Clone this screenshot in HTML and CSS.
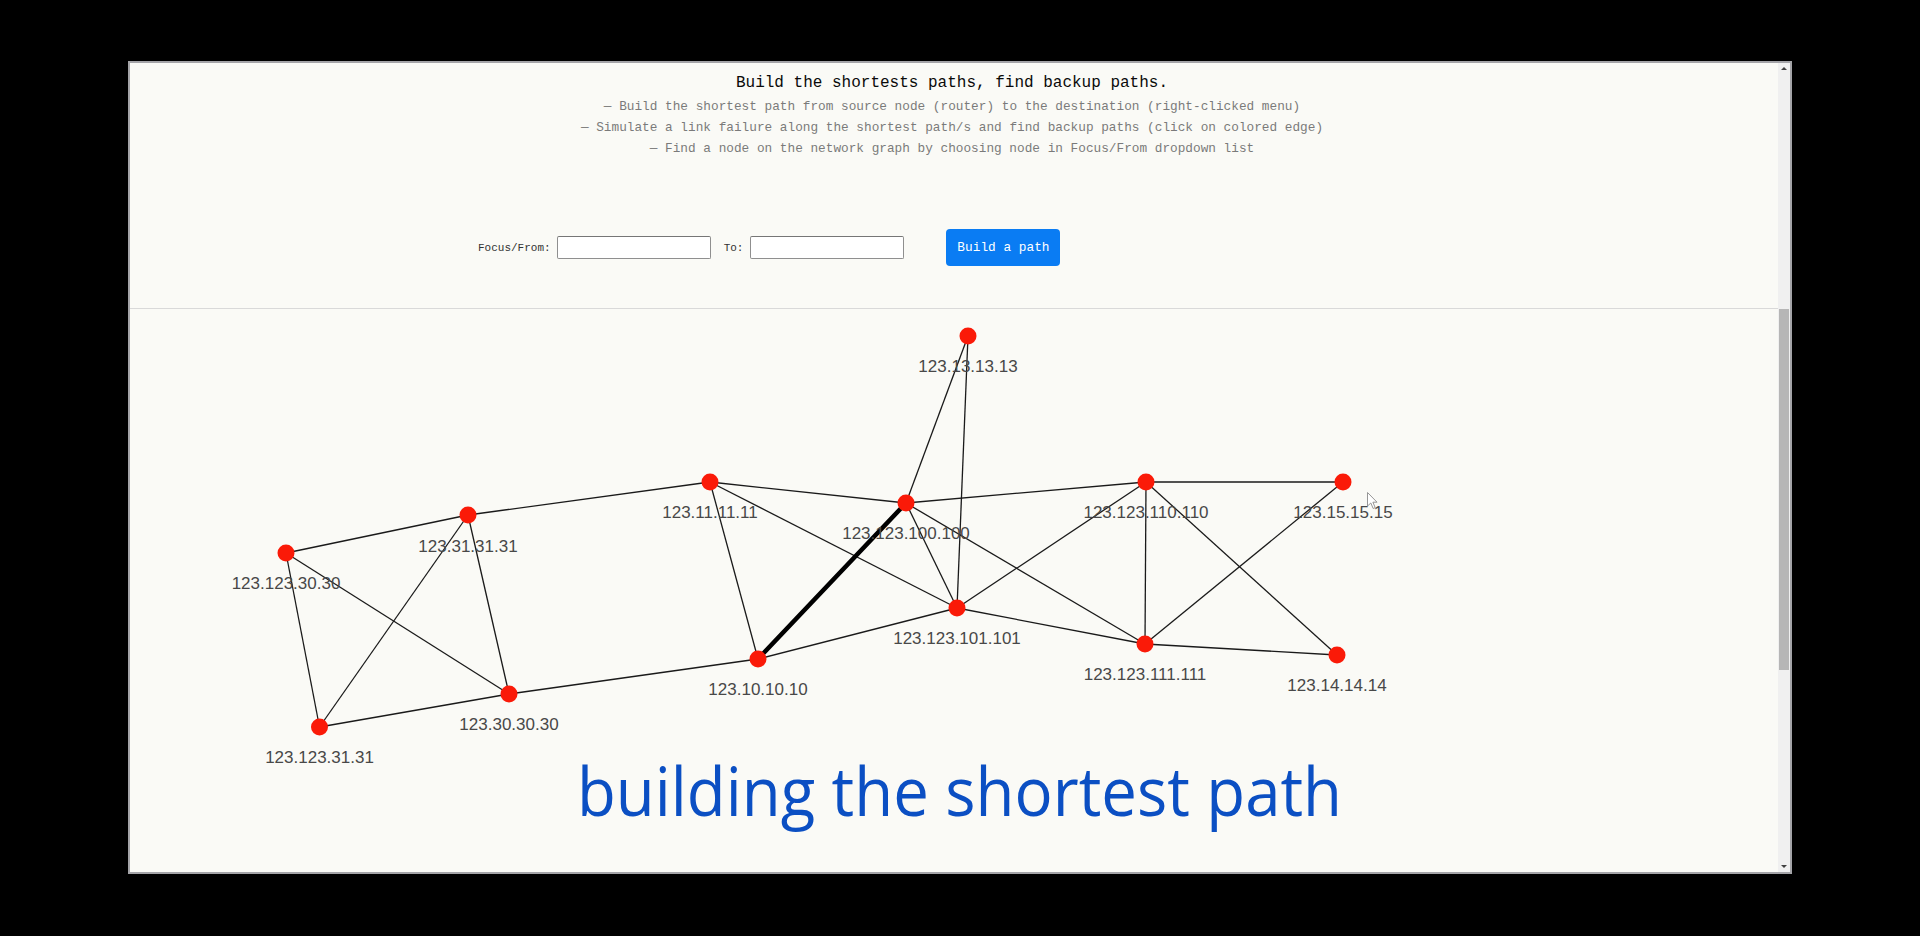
FILE: index.html
```html
<!DOCTYPE html>
<html lang="en">
<head>
<meta charset="utf-8">
<title>Shortest paths</title>
<link rel="stylesheet" href="styles.css">
</head>
<body>
<div class="stage">
  <div class="window">
    <div class="content">
      <header class="header">
        <h1 class="title">Build the shortests paths, find backup paths.</h1>
        <p class="hint">— Build the shortest path from source node (router) to the destination (right-clicked menu)</p>
        <p class="hint">— Simulate a link failure along the shortest path/s and find backup paths (click on colored edge)</p>
        <p class="hint">— Find a node on the network graph by choosing node in Focus/From dropdown list</p>
        <form class="form" onsubmit="return false;">
          <label class="lbl lbl-from" for="from">Focus/From:</label>
          <input class="field field-from" id="from" type="text">
          <label class="lbl lbl-to" for="to">To:</label>
          <input class="field field-to" id="to" type="text">
          <button class="btn" type="button">Build a path</button>
        </form>
      </header>
      <div class="graph">
        <svg class="net" width="1648" height="563" viewBox="130 309 1648 563" xmlns="http://www.w3.org/2000/svg">
          <g class="edges">
            <line x1="286" y1="553" x2="468" y2="515"/>
            <line x1="286" y1="553" x2="319.5" y2="727"/>
            <line x1="286" y1="553" x2="509" y2="694"/>
            <line x1="468" y1="515" x2="319.5" y2="727"/>
            <line x1="468" y1="515" x2="509" y2="694"/>
            <line x1="468" y1="515" x2="710" y2="482"/>
            <line x1="319.5" y1="727" x2="509" y2="694"/>
            <line x1="509" y1="694" x2="758" y2="659"/>
            <line x1="710" y1="482" x2="758" y2="659"/>
            <line x1="710" y1="482" x2="906" y2="503"/>
            <line x1="710" y1="482" x2="957" y2="608"/>
            <line x1="758" y1="659" x2="957" y2="608"/>
            <line x1="906" y1="503" x2="968" y2="336"/>
            <line x1="957" y1="608" x2="968" y2="336"/>
            <line x1="906" y1="503" x2="957" y2="608"/>
            <line x1="906" y1="503" x2="1146" y2="482"/>
            <line x1="906" y1="503" x2="1145" y2="644"/>
            <line x1="957" y1="608" x2="1146" y2="482"/>
            <line x1="957" y1="608" x2="1145" y2="644"/>
            <line x1="1146" y1="482" x2="1343" y2="482"/>
            <line x1="1146" y1="482" x2="1145" y2="644"/>
            <line x1="1146" y1="482" x2="1337" y2="655"/>
            <line x1="1145" y1="644" x2="1343" y2="482"/>
            <line x1="1145" y1="644" x2="1337" y2="655"/>
            <line class="path" x1="758" y1="659" x2="906" y2="503"/>
          </g>
          <g class="labels">
            <text x="968" y="371.5">123.13.13.13</text>
            <text x="906" y="538.5">123.123.100.100</text>
            <text x="1146" y="517.5">123.123.110.110</text>
            <text x="1343" y="517.5">123.15.15.15</text>
            <text x="957" y="643.5">123.123.101.101</text>
            <text x="1145" y="679.5">123.123.111.111</text>
            <text x="1337" y="691">123.14.14.14</text>
            <text x="286" y="588.5">123.123.30.30</text>
            <text x="468" y="551.5">123.31.31.31</text>
            <text x="710" y="517.5">123.11.11.11</text>
            <text x="758" y="694.5">123.10.10.10</text>
            <text x="509" y="729.5">123.30.30.30</text>
            <text x="319.5" y="762.5">123.123.31.31</text>
          </g>
          <g class="nodes">
            <circle cx="968" cy="336" r="8.5"/>
            <circle cx="906" cy="503" r="8.5"/>
            <circle cx="1146" cy="482" r="8.5"/>
            <circle cx="1343" cy="482" r="8.5"/>
            <circle cx="957" cy="608" r="8.5"/>
            <circle cx="1145" cy="644" r="8.5"/>
            <circle cx="1337" cy="655" r="8.5"/>
            <circle cx="286" cy="553" r="8.5"/>
            <circle cx="468" cy="515" r="8.5"/>
            <circle cx="710" cy="482" r="8.5"/>
            <circle cx="758" cy="659" r="8.5"/>
            <circle cx="509" cy="694" r="8.5"/>
            <circle cx="319.5" cy="727" r="8.5"/>
          </g>
          <path class="cursor" d="M1367.5 492.5 L1367.5 506 L1370.8 503 L1373.2 508.5 L1375.2 507.6 L1372.9 502.2 L1377 502.2 Z"/>
          <text class="caption" x="577" y="816" textLength="765" lengthAdjust="spacingAndGlyphs">building the shortest path</text>
        </svg>
      </div>
    </div>
    <div class="scrollbar">
      <div class="arrow arrow-up"></div>
      <div class="track">
        <div class="thumb"></div>
      </div>
      <div class="arrow arrow-down"></div>
    </div>
  </div>
</div>
</body>
</html>
```
FILE: styles.css
```css
html, body {
  margin: 0;
  padding: 0;
  background: #000;
  width: 1920px;
  height: 936px;
  overflow: hidden;
}

.stage {
  padding: 61px 0 0 128px;
}

.window {
  box-sizing: border-box;
  width: 1664px;
  height: 813px;
  border: 2px solid #a4a4a8;
  background: #fafaf6;
  display: flex;
}

.content {
  flex: 1;
  display: flex;
  flex-direction: column;
  min-width: 0;
}

.header {
  box-sizing: border-box;
  height: 246px;
  padding: 10px 4px 0 0;
  border-bottom: 1px solid #d9d9d9;
  text-align: center;
  font-family: "Liberation Mono", "DejaVu Sans Mono", monospace;
}

.title {
  margin: 0 0 3px;
  font-size: 16px;
  line-height: 20px;
  font-weight: normal;
  color: #0a0a0a;
}

.hint {
  margin: 0;
  font-size: 12.75px;
  line-height: 21px;
  color: #7a7a7a;
}

.form {
  display: flex;
  align-items: center;
  margin: 70px 0 0;
  padding-left: 348px;
  height: 37px;
}

.lbl {
  font-size: 11px;
  color: #333;
}

.lbl-from {
  margin-right: 6px;
}

.lbl-to {
  margin-right: 7px;
}

.field {
  box-sizing: border-box;
  width: 154px;
  height: 23px;
  margin: 0;
  padding: 0 4px;
  background: #fff;
  border: 1px solid #8f8f8f;
  border-top-color: #767676;
  border-radius: 2px;
}

.field-from {
  margin-right: 13px;
}

.field-to {
  margin-right: 42px;
}

.btn {
  box-sizing: border-box;
  width: 114px;
  height: 37px;
  margin: 0;
  padding: 0;
  border: 0;
  border-radius: 4px;
  background: #0a7cf3;
  color: #fff;
  font-family: "Liberation Mono", "DejaVu Sans Mono", monospace;
  font-size: 12.8px;
}

.graph {
  flex: 1;
  overflow: hidden;
}

.net {
  display: block;
}

.edges line {
  stroke: #1a1a1a;
  stroke-width: 1.3;
}

.edges .path {
  stroke: #000;
  stroke-width: 4.5;
  stroke-linecap: round;
}

.labels text {
  font-family: "Liberation Sans", Arial, sans-serif;
  font-size: 17px;
  fill: #484848;
  text-anchor: middle;
}

.nodes circle {
  fill: #fa1a08;
}

.cursor {
  fill: #fff;
  stroke: #8a8a8a;
  stroke-width: 0.9;
}

.caption {
  font-family: "Open Sans", "Noto Sans", sans-serif;
  font-size: 68px;
  fill: #0b4fc3;
}

.scrollbar {
  width: 12px;
  display: flex;
  flex-direction: column;
  background: #f0f0f0;
}

.arrow {
  height: 12px;
  position: relative;
}

.arrow-up::after,
.arrow-down::after {
  content: "";
  position: absolute;
  left: 3px;
  width: 0;
  height: 0;
  border-left: 3px solid transparent;
  border-right: 3px solid transparent;
}

.arrow-up::after {
  top: 4px;
  border-bottom: 3px solid #404040;
}

.arrow-down::after {
  bottom: 4px;
  border-top: 3px solid #404040;
}

.track {
  flex: 1;
  padding-top: 234px;
}

.thumb {
  height: 361px;
  margin: 0 1px;
  background: #b6b6b6;
}
```
